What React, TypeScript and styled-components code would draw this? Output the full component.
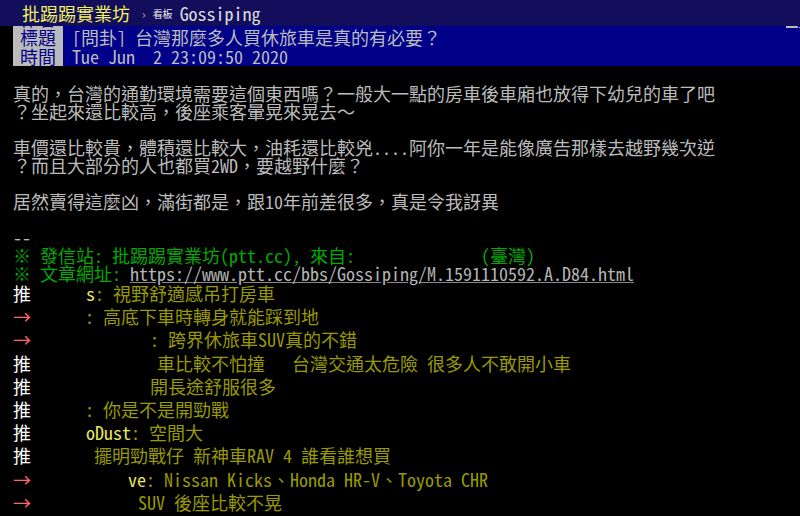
import styled, { createGlobalStyle } from "styled-components";

const FONT = `"Noto Sans Mono CJK TC", "Noto Sans CJK TC", "Liberation Mono", monospace`;

const GlobalStyle = createGlobalStyle`
  html, body {
    margin: 0;
    padding: 0;
    background: #000;
    overflow: hidden;
  }
  body {
    font-family: ${FONT};
    color: #bbb;
  }
`;

const TopBar = styled.div`
  position: fixed;
  top: 0;
  left: 0;
  right: 0;
  height: 26px;
  background: #120e5c;
  display: flex;
  align-items: center;
  padding-left: 22px;
  z-index: 10;
`;

const Logo = styled.span`
  color: #f2f25a;
  font-size: 18px;
`;

const Crumb = styled.span`
  color: #aaa;
  font-size: 12px;
  margin: 0 7px 0 12px;
`;

const BoardLabel = styled.span`
  color: #eee;
  font-size: 10px;
  margin-right: 7px;
`;

const BoardName = styled.span`
  color: #ddd;
  font-size: 18px;
`;

const Main = styled.div`
  padding: 9px 0 0 13px;
  font-size: 18px;
`;

const MetaLine = styled.div`
  display: flex;
  justify-content: space-between;
  height: 19px;
  line-height: 19px;
  background: #000088;
  overflow: hidden;
`;

const MetaPair = styled.div<{ $right?: boolean }>`
  display: flex;
  white-space: pre;
  margin-right: ${(p) => (p.$right ? "-36px" : "0")};
`;

const MetaTag = styled.span`
  width: 36px;
  padding: 0 7px;
  background: #bbb;
  color: #000088;
`;

const MetaValue = styled.span`
  padding-left: 9px;
  color: #bbb;
`;

const Body = styled.div`
  margin-top: 18px;
  line-height: 18px;
  white-space: pre;
`;

const Line = styled.div<{ $color?: string }>`
  height: 18px;
  color: ${(p) => p.$color || "#bbb"};
`;

const Link = styled.a`
  color: #b4b4b4;
  text-decoration: underline;
  text-decoration-color: #888;
`;

const Push = styled.div`
  height: 23.2px;
  line-height: 23.2px;
  white-space: pre;
`;

const PushTag = styled.span<{ $arrow?: boolean }>`
  color: ${(p) => (p.$arrow ? "#f66" : "#fff")};
`;

// black bar where the user id / IP was blacked out in the screenshot
const Mask = styled.span<{ $w: number }>`
  display: inline-block;
  width: ${(p) => p.$w}px;
  height: 1em;
  background: #000;
  vertical-align: middle;
`;

const PushUser = styled.span`
  color: #e8e860;
`;

const PushContent = styled.span`
  color: #990;
`;

interface IPush {
  tag: string;
  hidden: number;
  user: string;
  content: string;
}

const pushes: IPush[] = [
  { tag: "推", hidden: 46, user: "s", content: ": 視野舒適感吊打房車" },
  { tag: "→", hidden: 45, user: "", content: ": 高底下車時轉身就能踩到地" },
  { tag: "→", hidden: 110, user: "", content: ": 跨界休旅車SUV真的不錯" },
  { tag: "推", hidden: 117, user: "", content: "車比較不怕撞   台灣交通太危險 很多人不敢開小車" },
  { tag: "推", hidden: 110, user: "", content: "開長途舒服很多" },
  { tag: "推", hidden: 45, user: "", content: ": 你是不是開勁戰" },
  { tag: "推", hidden: 46, user: "oDust", content: ": 空間大" },
  { tag: "推", hidden: 54, user: "", content: "擺明勁戰仔 新神車RAV 4 誰看誰想買" },
  { tag: "→", hidden: 88, user: "ve", content: ": Nissan Kicks、Honda HR-V、Toyota CHR" },
  { tag: "→", hidden: 98, user: "", content: "SUV 後座比較不晃" },
];

export default function App() {
  return (
    <>
      <GlobalStyle />
      <TopBar>
        <Logo>批踢踢實業坊</Logo>
        <Crumb>›</Crumb>
        <BoardLabel>看板</BoardLabel>
        <BoardName>Gossiping</BoardName>
      </TopBar>
      <Main>
        <MetaLine>
          <MetaPair>
            <MetaTag>作者</MetaTag>
            <MetaValue>  </MetaValue>
          </MetaPair>
          <MetaPair $right>
            <MetaTag>看板</MetaTag>
          </MetaPair>
        </MetaLine>
        <MetaLine>
          <MetaPair>
            <MetaTag>標題</MetaTag>
            <MetaValue>[問卦] 台灣那麼多人買休旅車是真的有必要？</MetaValue>
          </MetaPair>
        </MetaLine>
        <MetaLine>
          <MetaPair>
            <MetaTag>時間</MetaTag>
            <MetaValue>Tue Jun  2 23:09:50 2020</MetaValue>
          </MetaPair>
        </MetaLine>

        <Body>
          <Line>真的，台灣的通勤環境需要這個東西嗎？一般大一點的房車後車廂也放得下幼兒的車了吧</Line>
          <Line>？坐起來還比較高，後座乘客暈晃來晃去～</Line>
          <Line> </Line>
          <Line>車價還比較貴，體積還比較大，油耗還比較兇....阿你一年是能像廣告那樣去越野幾次逆</Line>
          <Line>？而且大部分的人也都買2WD，要越野什麼？</Line>
          <Line> </Line>
          <Line>居然賣得這麼凶，滿街都是，跟10年前差很多，真是令我訝異</Line>
          <Line> </Line>
          <Line>--</Line>
          <Line $color="#0a0">
            ※ 發信站: 批踢踢實業坊(ptt.cc), 來自: <Mask $w={108} /> (臺灣)
          </Line>
          <Line $color="#0a0">
            ※ 文章網址: <Link href="#">https://www.ptt.cc/bbs/Gossiping/M.1591110592.A.D84.html</Link>
          </Line>
        </Body>

        {pushes.map((p, i) => (
          <Push key={i}>
            <PushTag $arrow={p.tag === "→"}>{p.tag} </PushTag>
            <Mask $w={p.hidden} />
            <PushUser>{p.user}</PushUser>
            <PushContent>{p.content}</PushContent>
          </Push>
        ))}
      </Main>
    </>
  );
}
